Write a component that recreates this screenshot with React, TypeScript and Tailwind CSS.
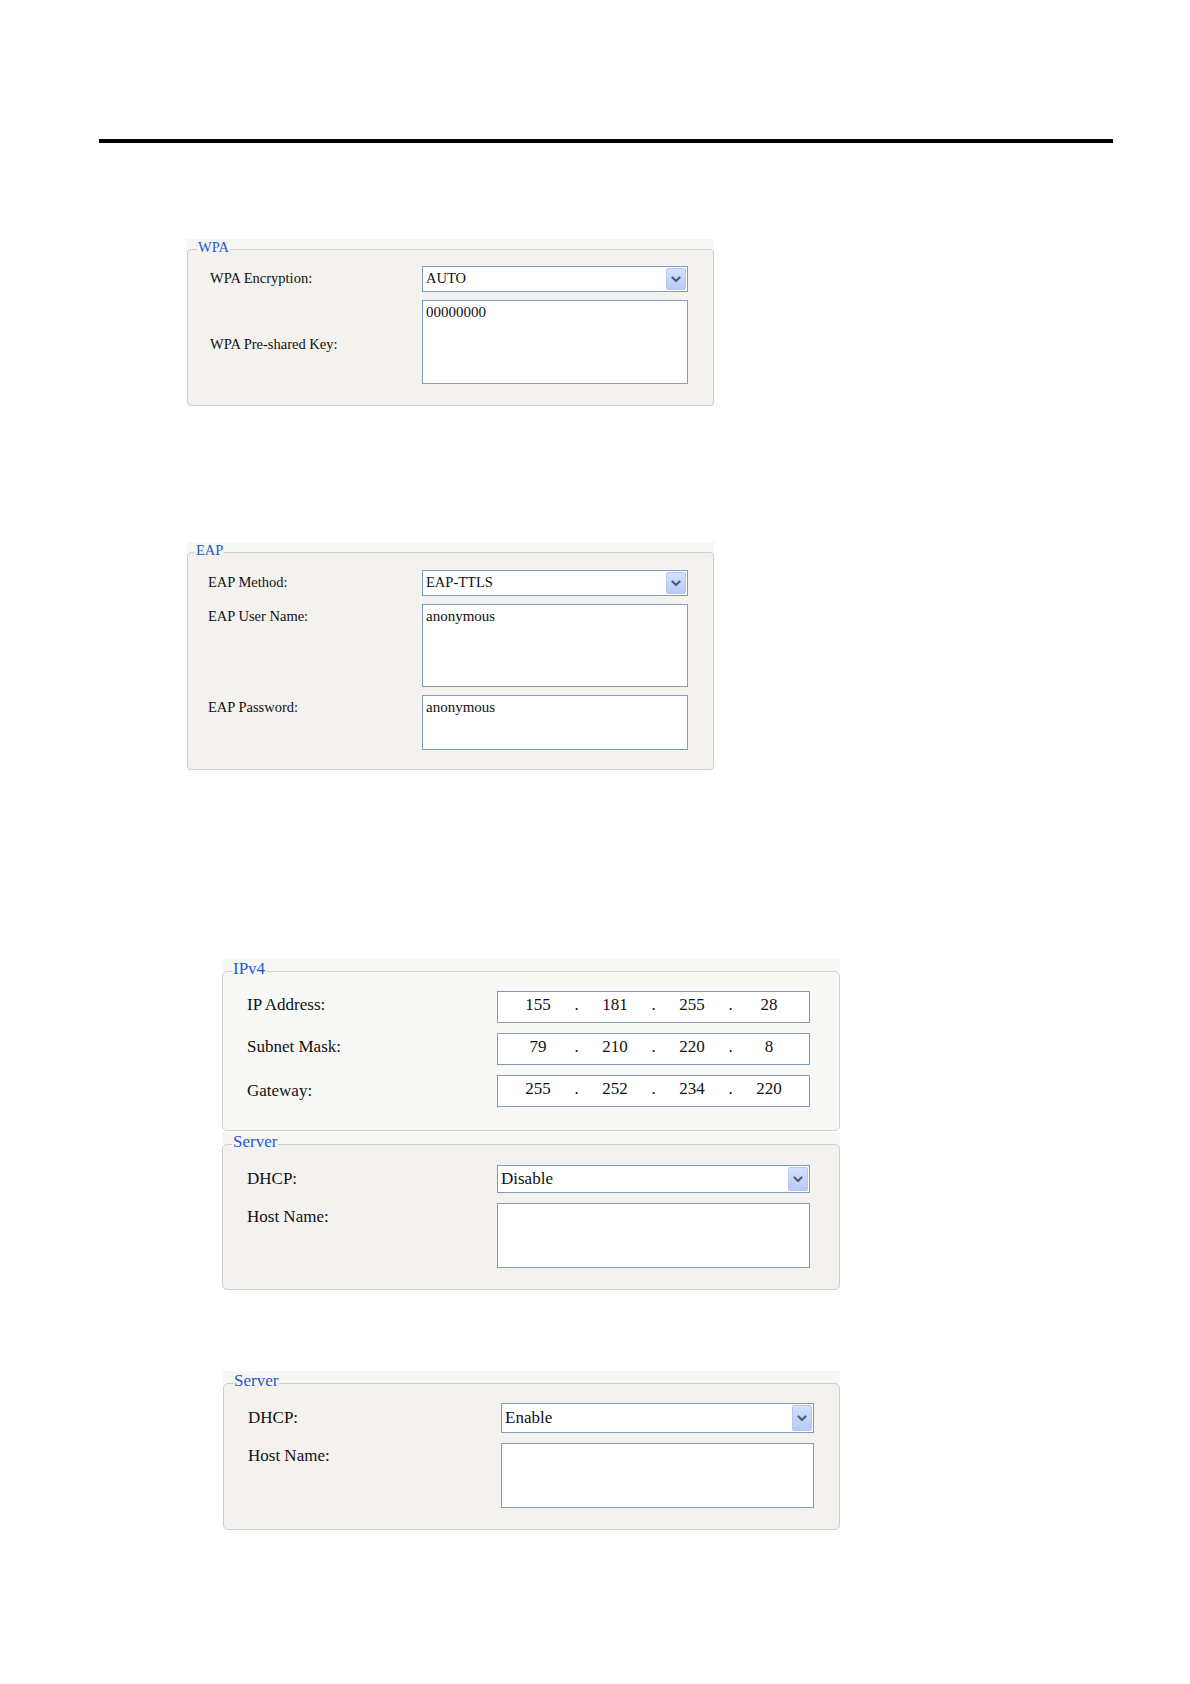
import React from "react";

const inputBorder = "border border-[#7f9db9]";

function Chevron() {
  return (
    <svg width="10" height="7" viewBox="0 0 10 7">
      <polyline
        points="1.5,1.5 5,5 8.5,1.5"
        fill="none"
        stroke="#4a5f86"
        strokeWidth="2.2"
        strokeLinecap="round"
        strokeLinejoin="round"
      />
    </svg>
  );
}

function Select({ value, cls, textCls }: { value: string; cls: string; textCls: string }) {
  return (
    <div className={`flex items-stretch justify-between bg-white ${inputBorder} ${cls}`}>
      <span className={`flex items-center pl-[3px] text-[#111] ${textCls}`}>{value}</span>
      <div className="my-[1px] mr-[1px] flex w-[20px] items-center justify-center rounded-[2px] border border-[#b7c8ef] bg-[linear-gradient(to_bottom,#d4e0fc,#b8cbf7)]">
        <Chevron />
      </div>
    </div>
  );
}

function Area({ value, cls, textCls }: { value?: string; cls: string; textCls?: string }) {
  return (
    <div className={`bg-white ${inputBorder} ${cls}`}>
      {value ? <div className={`px-[3px] pt-[2px] text-[#111] ${textCls ?? ""}`}>{value}</div> : null}
    </div>
  );
}

function IpBox({ parts }: { parts: string[] }) {
  return (
    <div className={`flex h-[32px] items-start bg-white pl-[9px] pt-[3px] ${inputBorder}`}>
      {parts.map((p, i) => (
        <React.Fragment key={i}>
          <span className="w-[62px] text-center text-[17px] leading-[20px] text-[#111]">{p}</span>
          {i < parts.length - 1 ? (
            <span className="w-[15px] text-center text-[17px] leading-[20px] text-[#111]">.</span>
          ) : null}
        </React.Fragment>
      ))}
    </div>
  );
}

export default function App() {
  return (
    <div className="relative h-[1684px] w-[1190px] overflow-hidden bg-white font-['Liberation_Serif','Times_New_Roman',serif] text-[#111]">
      {/* top rule */}
      <div className="ml-[99px] mt-[139px] h-[4px] w-[1014px] bg-black" />

      {/* WPA */}
      <div className="ml-[187px] mt-[96px] w-[527px] bg-[linear-gradient(to_bottom,#f6f6f4_0px,#f6f6f4_10px,transparent_10px)]">
        <fieldset className="rounded-[4px] border border-[#cfcfc6] bg-[#f3f2ee]">
          <legend className="ml-[9px] px-[1px] pb-[4px] text-[14.5px] leading-[16px] text-[#2357c9]">WPA</legend>
          <div className="grid grid-cols-[212px_266px] gap-y-[8px] pb-[21px] pl-[22px] pt-[7px]">
            <div className="flex items-center text-[14.5px]">WPA Encryption:</div>
            <Select value="AUTO" cls="h-[26px]" textCls="text-[14.5px]" />
            <div className="flex items-center pt-[6px] text-[14.5px]">WPA Pre-shared Key:</div>
            <Area value="00000000" cls="h-[84px]" textCls="text-[15px] leading-[18px]" />
          </div>
        </fieldset>
      </div>

      {/* EAP */}
      <div className="ml-[187px] mt-[136px] w-[527px] bg-[linear-gradient(to_bottom,#f6f6f4_0px,#f6f6f4_10px,transparent_10px)]">
        <fieldset className="rounded-[4px] border border-[#cfcfc6] bg-[#f3f2ee]">
          <legend className="ml-[7px] px-[1px] pb-[4px] text-[14.5px] leading-[16px] text-[#2357c9]">EAP</legend>
          <div className="grid grid-cols-[214px_266px] gap-y-[8px] pb-[19px] pl-[20px] pt-[8px]">
            <div className="flex items-center text-[14.5px]">EAP Method:</div>
            <Select value="EAP-TTLS" cls="h-[26px]" textCls="text-[14.5px]" />
            <div className="pt-[3px] text-[14.5px] leading-[18px]">EAP User Name:</div>
            <Area value="anonymous" cls="h-[83px]" textCls="text-[15px] leading-[18px]" />
            <div className="pt-[3px] text-[14.5px] leading-[18px]">EAP Password:</div>
            <Area value="anonymous" cls="h-[55px]" textCls="text-[15px] leading-[18px]" />
          </div>
        </fieldset>
      </div>

      {/* IPv4 */}
      <div className="ml-[222px] mt-[189px] w-[618px] bg-[linear-gradient(to_bottom,#f7f7f6_0px,#f7f7f6_12px,transparent_12px)]">
        <fieldset className="rounded-[5px] border border-[#d2d2cc] bg-[#f8f8f7]">
          <legend className="ml-[9px] px-[1px] pb-[4px] text-[17px] leading-[20px] text-[#2357c9]">IPv4</legend>
          <div className="grid grid-cols-[250px_313px] gap-y-[10px] pb-[23px] pl-[24px] pt-[8px]">
            <div className="flex items-center pb-[4px] text-[17px]">IP Address:</div>
            <IpBox parts={["155", "181", "255", "28"]} />
            <div className="flex items-center pb-[4px] text-[17px]">Subnet Mask:</div>
            <IpBox parts={["79", "210", "220", "8"]} />
            <div className="flex items-center text-[17px]">Gateway:</div>
            <IpBox parts={["255", "252", "234", "220"]} />
          </div>
        </fieldset>
      </div>

      {/* Server (Disable) */}
      <div className="ml-[222px] mt-[1px] w-[618px] bg-[linear-gradient(to_bottom,#f6f6f4_0px,#f6f6f4_12px,transparent_12px)]">
        <fieldset className="rounded-[5px] border border-[#cfcfc6] bg-[#f3f2ee]">
          <legend className="ml-[9px] px-[1px] pb-[4px] text-[17px] leading-[20px] text-[#2357c9]">Server</legend>
          <div className="grid grid-cols-[250px_313px] gap-y-[10px] pb-[21px] pl-[24px] pt-[9px]">
            <div className="flex items-center text-[17px]">DHCP:</div>
            <Select value="Disable" cls="h-[28px]" textCls="text-[17px]" />
            <div className="pt-[4px] text-[17px] leading-[20px]">Host Name:</div>
            <Area cls="h-[65px]" />
          </div>
        </fieldset>
      </div>

      {/* Server (Enable) */}
      <div className="ml-[223px] mt-[81px] w-[617px] bg-[linear-gradient(to_bottom,#f6f6f4_0px,#f6f6f4_12px,transparent_12px)]">
        <fieldset className="rounded-[5px] border border-[#cfcfc6] bg-[#f3f2ee]">
          <legend className="ml-[9px] px-[1px] pb-[4px] text-[17px] leading-[20px] text-[#2357c9]">Server</legend>
          <div className="grid grid-cols-[253px_313px] gap-y-[10px] pb-[21px] pl-[24px] pt-[8px]">
            <div className="flex items-center text-[17px]">DHCP:</div>
            <Select value="Enable" cls="h-[30px]" textCls="text-[17px]" />
            <div className="pt-[3px] text-[17px] leading-[20px]">Host Name:</div>
            <Area cls="h-[65px]" />
          </div>
        </fieldset>
      </div>
    </div>
  );
}
